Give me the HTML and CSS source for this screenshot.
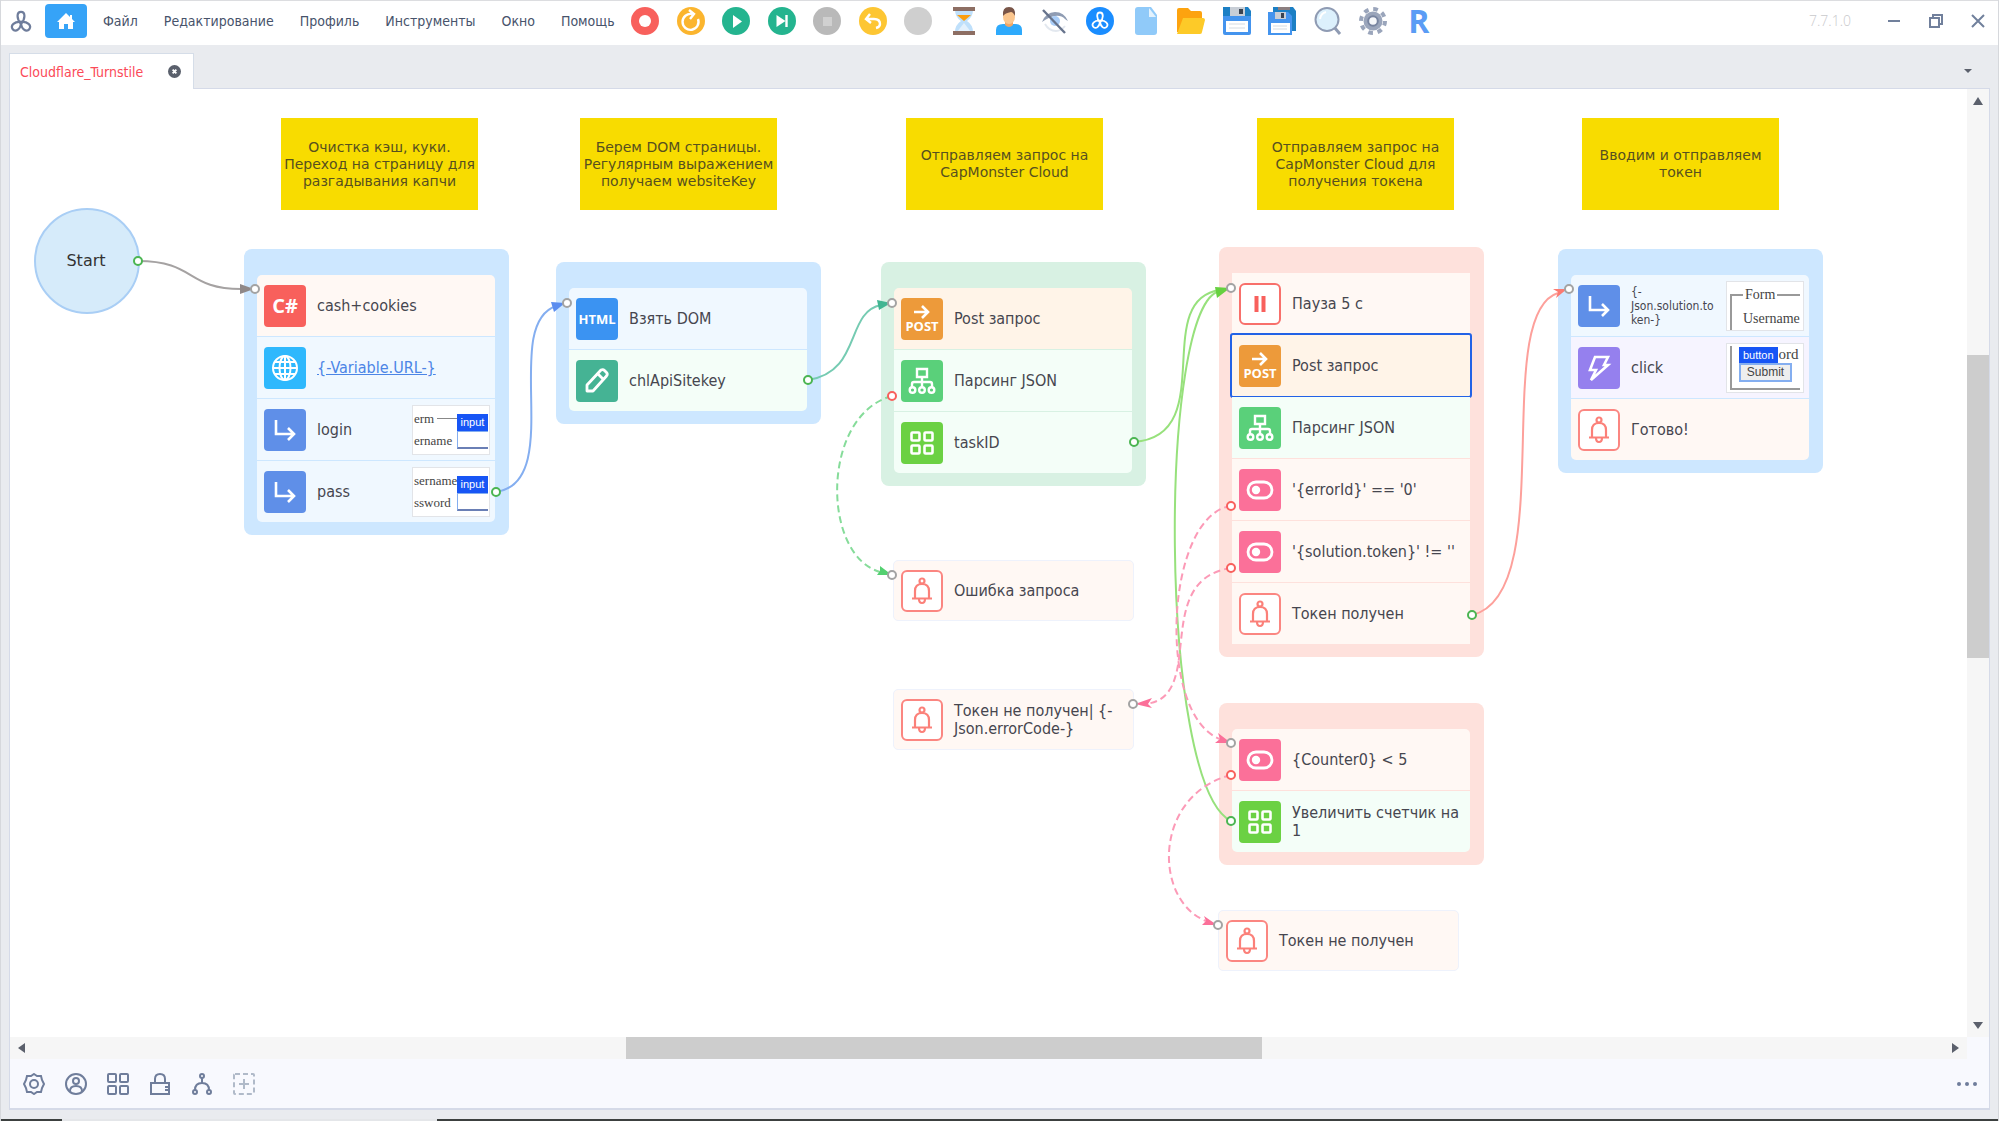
FILE: index.html
```html
<!DOCTYPE html>
<html lang="ru">
<head>
<meta charset="utf-8">
<title>Cloudflare_Turnstile</title>
<link rel="stylesheet" href="styles.css">
</head>
<body>
<svg class="defs" aria-hidden="true">
  <symbol id="i-knot" viewBox="0 0 24 24"><g fill="none" stroke="currentColor" stroke-width="2.4"><path d="M12 15C7 10 7 2 12 2s5 8 0 13z"/><path d="M12 13c-7-1-12 4-9 8s9 0 9-8z"/><path d="M12 13c7-1 12 4 9 8s-9 0-9-8z"/></g></symbol>
  <symbol id="i-globe" viewBox="0 0 28 28"><g fill="none" stroke="#fff" stroke-width="2"><circle cx="14" cy="14" r="12"/><ellipse cx="14" cy="14" rx="5.500" ry="12"/><path d="M14 2v24M2 14h24M4 8h20M4 20h20"/></g></symbol>
  <symbol id="i-enter" viewBox="0 0 28 28"><path d="M5 4v14h18M17 12l6 6-6 6" fill="none" stroke="#fff" stroke-width="2.600"/></symbol>
  <symbol id="i-pencil" viewBox="0 0 28 28"><path d="M4 18L18 3q2-1 3.500.5l2 2q1.500 1.500 0 3.500L10 24H4zM15 7l6 6" fill="none" stroke="#fff" stroke-width="2.800" stroke-linejoin="round"/></symbol>
  <symbol id="i-tree" viewBox="0 0 28 28"><g fill="none" stroke="#fff" stroke-width="2.400"><path d="M9 2h10v8H9zM14 10v10M4 20v-3q0-2 2-2h16q2 0 2 2v3"/><circle cx="4.500" cy="23" r="2.800"/><circle cx="14" cy="23" r="2.800"/><circle cx="23.500" cy="23" r="2.800"/></g></symbol>
  <symbol id="i-grid" viewBox="0 0 28 28"><g fill="none" stroke="currentColor" stroke-width="2.600"><rect x="3.500" y="3.500" width="8" height="8" rx="1"/><rect x="16.500" y="3.500" width="8" height="8" rx="1"/><rect x="3.500" y="16.500" width="8" height="8" rx="1"/><rect x="16.500" y="16.500" width="8" height="8" rx="1"/></g></symbol>
  <symbol id="i-toggle" viewBox="0 0 28 28"><rect x="2" y="6" width="24" height="16" rx="8" fill="none" stroke="#fff" stroke-width="2.800"/><circle cx="10" cy="14" r="4.200" fill="#fff"/></symbol>
  <symbol id="i-bell" viewBox="0 0 28 28"><g fill="none" stroke="#fb8079" stroke-width="2.200"><circle cx="14" cy="4" r="2.500"/><path d="M4 21.500h20M7 21v-7q0-7 7-7t7 7v7M11 22q0 4 3 4t3-4"/></g></symbol>
  <symbol id="i-pause" viewBox="0 0 28 28"><path d="M8.500 6h4v16h-4zM15.500 6h4v16h-4z" fill="#f8605c"/></symbol>
  <symbol id="i-bolt" viewBox="0 0 28 28"><path d="M10 3h13l-4 8h4L6 26l5-10H5z" fill="none" stroke="#fff" stroke-width="2.600"/></symbol>
  <symbol id="i-arrow" viewBox="0 0 18 14"><path d="M1 7h14M9 1l6 6-6 6" fill="none" stroke="#fff" stroke-width="2.600"/></symbol>
</svg>

<div class="app">
  <header class="topbar">
    <svg class="logo"><use href="#i-knot"/></svg>
    <button class="home" aria-label="Домой"><svg viewBox="0 0 20 18"><path d="M10 1L1 10h2v7h5v-5h4v5h5v-7h2l-3-3V3h-2v2z" fill="#fff"/></svg></button>
    <nav class="menu">
      <a href="#">Файл</a><a href="#">Редактирование</a><a href="#">Профиль</a><a href="#">Инструменты</a><a href="#">Окно</a><a href="#">Помощь</a>
    </nav>
    <div class="tools">
      <button aria-label="Запись"><svg viewBox="0 0 28 28"><circle cx="14" cy="14" r="14" fill="#f8605c"/><circle cx="14" cy="14" r="6" fill="#fff"/></svg></button>
      <button aria-label="Обновить"><svg viewBox="0 0 28 28"><circle cx="14" cy="14" r="14" fill="#fbb52e"/><path d="M21 12a8 8 0 1 1-6-5M12 3l5 4-4 5" fill="none" stroke="#fff" stroke-width="2.400"/></svg></button>
      <button aria-label="Пуск"><svg viewBox="0 0 28 28"><circle cx="14" cy="14" r="14" fill="#24b48f"/><path d="M11 8v13l9-6.500z" fill="#fff"/></svg></button>
      <button aria-label="Шаг"><svg viewBox="0 0 28 28"><circle cx="14" cy="14" r="14" fill="#24b48f"/><path d="M8.500 8v12l9-6z" fill="#fff"/><path d="M18.500 8v12" stroke="#fff" stroke-width="2.400"/></svg></button>
      <button aria-label="Стоп"><svg viewBox="0 0 28 28"><circle cx="14" cy="14" r="14" fill="#b9b9b9"/><path d="M10 10h9v9h-9z" fill="#d0d0d0"/></svg></button>
      <button aria-label="Отменить"><svg viewBox="0 0 28 28"><circle cx="14" cy="14" r="14" fill="#fdc633"/><path d="M7 12h8q6 0 6 5 0 3-4 4M11 7l-4 5 5 4" fill="none" stroke="#fff" stroke-width="2.400"/></svg></button>
      <button aria-label="Повторить"><svg viewBox="0 0 28 28"><circle cx="14" cy="14" r="14" fill="#cfcfcf"/></svg></button>
      <button aria-label="Ожидание"><svg viewBox="0 0 28 28"><path d="M5 3h18q0 7-6 11 6 4 6 11H5q0-7 6-11-6-4-6-11z" fill="#bfe0fb"/><path d="M7 8h14l-7 6z" fill="#fb9d0c"/><path d="M14 16l7 9H7z" fill="#e3f1fd"/><path d="M3 0h22v4H3zM3 24h22v4H3z" fill="#8d6e63"/></svg></button>
      <button aria-label="Профиль"><svg viewBox="0 0 28 28"><path d="M1 28v-5q0-6 7-6h12q7 0 7 6v5z" fill="#2eaafc"/><path d="M10 14h8v4q-4 4-8 0z" fill="#f0a768"/><ellipse cx="14" cy="10" rx="6" ry="7" fill="#fbc68e"/><path d="M8 9q-1-9 6-9t6 9q-2-4-4-4-6 1-8 4z" fill="#795548"/></svg></button>
      <button aria-label="Скрыть"><svg viewBox="0 0 28 28"><path d="M1 15Q5 5 14 5t13 9q-2-1-3-2-4-4-10-3T1 15z" fill="#8f9cb3"/><circle cx="14" cy="14" r="5" fill="#a9cdf8"/><path d="M4 17q4 7 11 7 5 0 9-5" fill="none" stroke="#e3e8ef" stroke-width="2"/><path d="M2 3l22 23" stroke="#66738c" stroke-width="2.400"/></svg></button>
      <button aria-label="Проект"><svg viewBox="0 0 28 28" color="#fff"><circle cx="14" cy="14" r="14" fill="#1a8dff"/><use href="#i-knot" x="5" y="4" width="18" height="18"/></svg></button>
      <button aria-label="Новый"><svg viewBox="0 0 28 28"><path d="M6 0h13l6 8v17q0 3-3 3H6q-3 0-3-3V3q0-3 3-3z" fill="#90caf9"/><path d="M17 1v9h7z" fill="#e3f2fd"/></svg></button>
      <button aria-label="Открыть"><svg viewBox="0 0 28 28"><path d="M2 1h9l3 3h9q2 0 2 2v19H0V3q0-2 2-2z" fill="#fda30f"/><path d="M6 11h20q2 0 2 2l-3 12q0 2-2 2H0z" fill="#fdca28"/></svg></button>
      <button aria-label="Сохранить"><svg viewBox="0 0 28 28"><path d="M0 0h24l4 5v21q0 2-2 2H2q-2 0-2-2z" fill="#4494ee"/><path d="M0 0h7v9H0zM22 0h3l3 4v5h-6z" fill="#1c7fc4"/><path d="M7 0h15v9H7z" fill="#c8ced6"/><path d="M16 2h4v5h-4z" fill="#3a4350"/><path d="M3 14h22v11H3z" fill="#fff"/><path d="M6 17h16M6 21h16" stroke="#d5dbe2"/></svg></button>
      <button aria-label="Сохранить все"><svg viewBox="0 0 28 28"><path d="M5 0h20l3 4v20H5z" fill="#1c7fc4"/><path d="M10 0h12v3H10z" fill="#8c7f80"/><path d="M0 5h20l4 4v19H0z" fill="#4494ee"/><path d="M7 5h11v7H7z" fill="#c8ced6"/><path d="M13 6h3v5h-3z" fill="#3a4350"/><path d="M3 16h19v10H3z" fill="#fff"/><path d="M5 19h14M5 22h14" stroke="#d5dbe2"/></svg></button>
      <button aria-label="Поиск"><svg viewBox="0 0 28 28"><path d="M20 20l6 7" stroke="#8f9bb3" stroke-width="3"/><circle cx="13" cy="12.500" r="11.500" fill="#dcf0fc" stroke="#8f9bb3" stroke-width="2"/><path d="M6 12q1-6 6-7" stroke="#fff" stroke-width="2" fill="none"/></svg></button>
      <button aria-label="Настройки"><svg viewBox="0 0 28 28"><circle cx="14" cy="14" r="9.500" fill="#9aa5bb"/><circle cx="14" cy="14" r="12" fill="none" stroke="#9aa5bb" stroke-width="4" stroke-dasharray="4.700 4.700"/><circle cx="14" cy="14" r="4.800" fill="#f5f7fa" stroke="#7784a0" stroke-width="2"/></svg></button>
      <button class="reg" aria-label="R">R</button>
    </div>
    <span class="version">7.7.1.0</span>
    <div class="win">
      <button aria-label="Свернуть"><svg viewBox="0 0 14 14"><path d="M1 7h12"/></svg></button>
      <button aria-label="Развернуть"><svg viewBox="0 0 14 14"><path d="M1 4h9v9H1zM4 4V1h9v9h-3"/></svg></button>
      <button aria-label="Закрыть"><svg viewBox="0 0 14 14"><path d="M1 1l12 12M13 1L1 13"/></svg></button>
    </div>
  </header>

  <main class="work">
    <div class="tabs">
      <div class="tab"><span>Cloudflare_Turnstile</span><button aria-label="Закрыть вкладку"><svg viewBox="0 0 14 14"><circle cx="7" cy="7" r="7" fill="#5a606c"/><path d="M5 5l4 4M9 5L5 9" stroke="#fff" stroke-width="2"/></svg></button></div>
      <button class="tab-list" aria-label="Список вкладок"><i class="tri down"></i></button>
    </div>
    <div class="panel">
      <div class="view">
        <div class="board">
          <p class="note n1">Очистка кэш, куки.<br>Переход на страницу для<br>разгадывания капчи</p>
          <p class="note n2">Берем DOM страницы.<br>Регулярным выражением<br>получаем websiteKey</p>
          <p class="note n3">Отправляем запрос на<br>CapMonster Cloud</p>
          <p class="note n4">Отправляем запрос на<br>CapMonster Cloud для<br>получения токена</p>
          <p class="note n5">Вводим и отправляем<br>токен</p>

          <div class="start">Start</div>

          <section class="group blue g1"><ul>
            <li class="cream"><b class="ico red big">C#</b><span>cash+cookies</span></li>
            <li class="sky"><b class="ico cyan"><svg><use href="#i-globe"/></svg></b><a href="#">{-Variable.URL-}</a></li>
            <li class="sky"><b class="ico indigo"><svg><use href="#i-enter"/></svg></b><span>login</span>
              <div class="thumb form"><div class="words"><p>erm<i></i></p><p>ername</p></div><div class="pick"><em>input</em><i></i></div></div></li>
            <li class="sky"><b class="ico indigo"><svg><use href="#i-enter"/></svg></b><span>pass</span>
              <div class="thumb form"><div class="words"><p>sername</p><p>ssword</p></div><div class="pick"><em>input</em><i></i></div></div></li>
          </ul></section>

          <section class="group blue g2"><ul>
            <li class="sky"><b class="ico azure">HTML</b><span>Взять DOM</span></li>
            <li class="mint"><b class="ico teal"><svg><use href="#i-pencil"/></svg></b><span>chlApiSitekey</span></li>
          </ul></section>

          <section class="group green g3"><ul>
            <li class="peach"><b class="ico orange"><svg class="arr"><use href="#i-arrow"/></svg>POST</b><span>Post запрос</span></li>
            <li class="mint"><b class="ico jade"><svg><use href="#i-tree"/></svg></b><span>Парсинг JSON</span></li>
            <li class="mint"><b class="ico lime"><svg><use href="#i-grid"/></svg></b><span>taskID</span></li>
          </ul></section>

          <section class="group rose g4"><ul>
            <li class="cream"><b class="ico line"><svg><use href="#i-pause"/></svg></b><span>Пауза 5 с</span></li>
            <li class="peach selected"><b class="ico orange"><svg class="arr"><use href="#i-arrow"/></svg>POST</b><span>Post запрос</span></li>
            <li class="mint"><b class="ico jade"><svg><use href="#i-tree"/></svg></b><span>Парсинг JSON</span></li>
            <li class="cream"><b class="ico pink"><svg><use href="#i-toggle"/></svg></b><span>'{errorId}' == '0'</span></li>
            <li class="cream"><b class="ico pink"><svg><use href="#i-toggle"/></svg></b><span>'{solution.token}' != ''</span></li>
            <li class="cream"><b class="ico line soft"><svg><use href="#i-bell"/></svg></b><span>Токен получен</span></li>
          </ul></section>

          <section class="group rose g5"><ul>
            <li class="cream"><b class="ico pink"><svg><use href="#i-toggle"/></svg></b><span>{Counter0} &lt; 5</span></li>
            <li class="mint"><b class="ico lime"><svg><use href="#i-grid"/></svg></b><span>Увеличить счетчик на<br>1</span></li>
          </ul></section>

          <section class="group blue g6"><ul>
            <li class="sky"><b class="ico indigo"><svg><use href="#i-enter"/></svg></b><span class="small">{-<br>Json.solution.to<br>ken-}</span>
              <div class="thumb legend"><p>Form</p><p>Username</p></div></li>
            <li class="lilac"><b class="ico violet"><svg><use href="#i-bolt"/></svg></b><span>click</span>
              <div class="thumb submit"><div><p><em>button</em>ord</p><strong>Submit</strong></div></div></li>
            <li class="cream"><b class="ico line soft"><svg><use href="#i-bell"/></svg></b><span>Готово!</span></li>
          </ul></section>

          <div class="single s1"><b class="ico line soft"><svg><use href="#i-bell"/></svg></b><span>Ошибка запроса</span></div>
          <div class="single s2"><b class="ico line soft"><svg><use href="#i-bell"/></svg></b><span>Токен не получен| {-<br>Json.errorCode-}</span></div>
          <div class="single s3"><b class="ico line soft"><svg><use href="#i-bell"/></svg></b><span>Токен не получен</span></div>

          <svg class="edges" viewBox="10 89 1956 948" aria-hidden="true">
            <g fill="none" stroke-width="2">
              <path stroke="#a5a2a2" d="M138 261C196 261 186 289 241 289"/>
              <path stroke="#84aef0" d="M496 492C566 482 500 325 556 306"/>
              <path stroke="#75cbb2" d="M808 380C862 372 845 312 881 305"/>
              <path stroke="#97e17c" d="M1134 442C1220 436 1150 300 1220 290"/>
              <path stroke="#97e17c" d="M1231 821C1158 785 1158 302 1220 291"/>
              <path stroke="#fda09b" d="M1472 615C1560 595 1490 314 1558 293"/>
              <g stroke-dasharray="7 4">
                <path stroke="#86dc9a" d="M892 396C821 415 821 555 880 572"/>
                <path stroke="#fc9ab7" d="M1231 506C1165 515 1156 715 1220 739"/>
                <path stroke="#fc9ab7" d="M1231 568C1150 580 1208 698 1145 704"/>
                <path stroke="#fc9ab7" d="M1231 775C1153 795 1153 900 1206 921"/>
              </g>
            </g>
            <g>
              <path fill="#8f8888" d="M240 284l14 5-14 5z"/>
              <path fill="#5b8def" d="M551 302l14 1-11 9z"/>
              <path fill="#42b592" d="M877 300l14 3-12 7z"/>
              <path fill="#66d03f" d="M1215 287l15 1-13 10z"/>
              <path fill="#fb7a72" d="M1553 289l14 0-11 9 2-6z"/>
              <path fill="#53d070" d="M880 566l12 9-15 0 3-4z"/>
              <path fill="#fb7099" d="M1218 733l13 10-16 0 5-4z"/>
              <path fill="#fb7099" d="M1152 698l-17 6 17 4-4-4z"/>
              <path fill="#fb7099" d="M1204 916l13 9-15 0 4-4z"/>
            </g>
            <g fill="#fff" stroke-width="2">
              <g stroke="#a3a3a3"><circle cx="255" cy="289" r="4"/><circle cx="567" cy="303" r="4"/><circle cx="892" cy="303" r="4"/><circle cx="892" cy="575" r="4"/><circle cx="1133" cy="704" r="4"/><circle cx="1231" cy="288" r="4"/><circle cx="1231" cy="743" r="4"/><circle cx="1218" cy="925" r="4"/><circle cx="1569" cy="289" r="4"/></g>
              <g stroke="#4bb552"><circle cx="138" cy="261" r="4"/><circle cx="496" cy="492" r="4"/><circle cx="808" cy="380" r="4"/><circle cx="1134" cy="442" r="4"/><circle cx="1472" cy="615" r="4"/><circle cx="1231" cy="821" r="4"/></g>
              <g stroke="#f8605c"><circle cx="892" cy="396" r="4"/><circle cx="1231" cy="506" r="4"/><circle cx="1231" cy="568" r="4"/><circle cx="1231" cy="775" r="4"/></g>
            </g>
          </svg>
        </div>
        <div class="vscroll"><i class="tri up"></i><div class="track"><div class="thumb-v"></div></div><i class="tri down"></i></div>
        <div class="hscroll"><i class="tri left"></i><div class="track"><div class="thumb-h"></div></div><i class="tri right"></i></div>
      </div>
      <footer class="bottom">
        <button aria-label="Параметры"><svg viewBox="0 0 22 22"><path d="M11 1l3 2 4 0 1 4 2 4-2 4-1 4-4 0-3 2-3-2-4 0-1-4-2-4 2-4 1-4 4 0z"/><circle cx="11" cy="11" r="4"/></svg></button>
        <button aria-label="Профиль"><svg viewBox="0 0 22 22"><circle cx="11" cy="11" r="10"/><circle cx="11" cy="8" r="3"/><path d="M5 18q0-5 6-5t6 5"/></svg></button>
        <button aria-label="Переменные"><svg viewBox="0 0 22 22"><rect x="1" y="1" width="8" height="8" rx="1"/><rect x="13" y="1" width="8" height="8" rx="1"/><rect x="1" y="13" width="8" height="8" rx="1"/><rect x="13" y="13" width="8" height="8" rx="1"/></svg></button>
        <button aria-label="Защита"><svg viewBox="0 0 22 22"><path d="M2 10h18v11H2zM6 10V6q0-5 5-5t5 5v4M16 14h3M16 17h3"/></svg></button>
        <button aria-label="Ветвление"><svg viewBox="0 0 22 22"><circle cx="11" cy="3" r="2"/><circle cx="4" cy="19" r="2"/><circle cx="18" cy="19" r="2"/><path d="M11 5v5M4 17q0-7 7-7t7 7"/></svg></button>
        <button class="dim" aria-label="Добавить"><svg viewBox="0 0 22 22"><rect x="1" y="1" width="20" height="20" rx="1" stroke-dasharray="5 3"/><path d="M11 6v10M6 11h10"/></svg></button>
        <button class="more" aria-label="Ещё"><svg viewBox="0 0 22 22"><g fill="#6f7d9b" stroke="none"><circle cx="3" cy="11" r="2"/><circle cx="11" cy="11" r="2"/><circle cx="19" cy="11" r="2"/></g></svg></button>
      </footer>
    </div>
  </main>
  <div class="taskline"><i></i></div>
</div>
</body>
</html>
```
FILE: styles.css
```css
* { box-sizing: border-box; }
body { margin: 0; font: 16px/18px "DejaVu Sans Condensed", "DejaVu Sans", sans-serif; color: #46464f; background: #e9ebef; }
button { border: 0; padding: 0; background: none; font: inherit; color: inherit; display: flex; align-items: center; justify-content: center; }
p, ul { margin: 0; padding: 0; list-style: none; }
i, em { font-style: normal; }
.defs { display: none; }
.app { min-height: 100vh; display: flex; flex-direction: column; border-left: 1px solid #d6d8dc; border-right: 1px solid #d6d8dc; }

/* top bar */
.topbar { height: 45px; flex: none; display: flex; align-items: center; background: #fff; border-top: 1px solid #dcdde0; padding-bottom: 4px; }
.logo { width: 22px; height: 22px; margin: 0 13px 0 9px; color: #6f7d9b; flex: none; }
.home { width: 42px; height: 34px; border-radius: 4px; background: #36a3f7; flex: none; }
.home svg { width: 20px; height: 18px; }
.menu { display: flex; gap: 26px; width: 544px; padding-left: 16px; flex: none; font-size: 14px; }
.menu a { color: #47536b; text-decoration: none; white-space: nowrap; }
.tools { display: flex; justify-content: space-between; width: 802px; flex: none; height: 28px; }
.tools button { width: 28px; height: 28px; }
.tools button > svg { width: 28px; height: 28px; }
.tools .reg { font: bold 32px/28px "Open Sans", sans-serif; color: #5a9cf5; }
.version { margin-left: auto; margin-right: 22px; color: #c9c9cc; font: 300 14px/18px "Open Sans", sans-serif; }
.win { display: flex; flex: none; margin-right: -1px; }
.win button { width: 42px; height: 40px; }
.win svg { width: 14px; height: 14px; fill: none; stroke: #71809c; stroke-width: 2; }

/* work area */
.work { flex: 1; display: flex; flex-direction: column; padding: 8px 8px 9px; }
.tabs { height: 36px; display: flex; justify-content: space-between; margin-bottom: -1px; position: relative; }
.tab { width: 185px; display: flex; align-items: center; justify-content: space-between; padding: 0 12px 0 10px; background: #fff; border: 1px solid #d5dde8; border-bottom: 0; color: #fb4a58; font-size: 14px; }
.tab svg { width: 13px; height: 13px; display: block; }
.tab-list { width: 44px; }
.panel { flex: 1; display: flex; flex-direction: column; border: 1px solid #d5dae8; border-bottom-width: 2px; background: #f8f9fe; }
.view { flex: 1; display: grid; grid-template: minmax(948px, 1fr) 22px / minmax(0, 1fr) 22px; }
.vscroll, .hscroll { background: #f6f6f6; display: flex; align-items: center; justify-content: space-between; }
.vscroll { flex-direction: column; padding: 8px 0; }
.hscroll { padding: 0 8px; }
.track { flex: 1; display: flex; align-self: stretch; }
.vscroll .track { flex-direction: column; }
.vscroll .track::before { content: ""; flex: 0 0 27.3%; }
.hscroll .track::before { content: ""; flex: 0 0 31.2%; }
.thumb-v { background: #cdcdcd; height: 33%; }
.thumb-h { background: #cdcdcd; width: 33%; }
.tri { border: 5px solid transparent; width: 0; height: 0; }
.tri.up { border-bottom: 8px solid #5b606c; border-top: 0; }
.tri.down { border-top: 7px solid #5b606c; border-bottom: 0; }
.tri.left { border-right: 7px solid #5b606c; border-left: 0; }
.tri.right { border-left: 7px solid #5b606c; border-right: 0; }
.tab-list .tri { border-width: 4px 4px 0; }

.bottom { height: 49px; display: flex; align-items: center; gap: 20px; padding: 0 11px 0 13px; }
.bottom svg { width: 22px; height: 22px; fill: none; stroke: #6f7d9b; stroke-width: 2; }
.bottom .dim svg { stroke: #b0bac9; }
.bottom .more { margin-left: auto; }
.taskline { height: 2px; background: #3c403f; padding-left: 61px; flex: none; }
.taskline i { display: block; width: 375px; height: 2px; background: #e4e6e9; }

/* free canvas */
.board { position: relative; background: #fff; overflow: hidden; }
.edges { position: absolute; left: 0; top: 0; width: 1956px; height: 948px; }
.note, .start, .group, .single { position: absolute; }
.note { width: 197px; height: 92px; top: 29px; background: #f8dc00; color: #57501f; display: flex; align-items: center; justify-content: center; text-align: center; font: 14px/17px "DejaVu Sans", sans-serif; white-space: nowrap; }
.n1 { left: 271px; } .n2 { left: 570px; } .n3 { left: 896px; } .n4 { left: 1247px; } .n5 { left: 1572px; }
.start { left: 24px; top: 119px; width: 106px; height: 106px; border-radius: 50%; background: #d6ebfa; border: 2px solid #a9cef5; display: flex; align-items: center; justify-content: center; color: #333; font-family: "DejaVu Sans", sans-serif; padding-right: 2px; }
.group { width: 265px; padding: 26px 14px 13px 13px; border-radius: 8px; }
.blue { background: #cde7ff; } .green { background: #d8f1e3; } .rose { background: #fee1dc; }
.g1 { left: 234px; top: 160px; } .g2 { left: 546px; top: 173px; } .g3 { left: 871px; top: 173px; }
.g4 { left: 1209px; top: 158px; } .g5 { left: 1209px; top: 614px; } .g6 { left: 1548px; top: 160px; }
.group ul { display: flex; flex-direction: column; gap: 1px; border-radius: 5px; overflow: hidden; }
.group li, .single { height: 61px; display: flex; align-items: center; gap: 11px; padding: 0 5px 0 7px; white-space: nowrap; }
.group li > a { color: #4c85e6; }
.single { width: 241px; background: #fff8f4; border: 1px solid #eef2fc; border-radius: 5px; }
.s1 { left: 883px; top: 471px; } .s2 { left: 883px; top: 600px; } .s3 { left: 1208px; top: 821px; }
.cream { background: #fff8f4; } .sky { background: #f0f8ff; } .mint { background: #f4fef8; } .peach { background: #fff4e8; } .lilac { background: #f6f4ff; }
.group ul:has(.selected) { overflow: visible; }
.selected { outline: 2px solid #2262e6; border-radius: 1px; }
.ico { width: 42px; height: 42px; flex: none; border-radius: 4px; display: flex; flex-direction: column; align-items: center; justify-content: center; color: #fff; font: bold 13px/14px "Open Sans", sans-serif; }
.ico.big { font-size: 20px; line-height: 24px; }
.ico svg { width: 28px; height: 28px; }
.ico .arr { width: 18px; height: 14px; }
.red { background: #f8605c; } .cyan { background: #2eb8fd; } .indigo { background: #5f8fe8; } .azure { background: #3b93f2; }
.teal { background: #45b394; } .orange { background: #ed9a3a; } .jade { background: #5ad07a; } .lime { background: #6bd143; }
.pink { background: #fb7099; } .violet { background: #9580ee; }
.line { background: #fff; border: 2px solid #f8706b; border-radius: 6px; }
.line.soft { border-color: #fb8681; }
.small { font-size: 12px; line-height: 14px; }

/* page previews */
.thumb { width: 78px; height: 50px; margin-left: auto; flex: none; background: #fff; border: 1px solid #e2e4e8; font: 13px/22px "Liberation Serif", serif; color: #444; }
.form { display: flex; padding: 2px 1px; }
.words { width: 43px; }
.words p { display: flex; align-items: center; gap: 3px; }
.words i { flex: 1; height: 1px; background: #888; }
.thumb em { background: #1755f5; color: #fff; font: 11px/17px "Liberation Sans", sans-serif; }
.pick { flex: 1; padding-top: 6px; }
.pick em { display: block; text-align: center; }
.pick i { display: block; height: 18px; border: 1px solid #84aef0; border-bottom: 2px solid #6a7fb5; border-right: 0; }
.legend { padding: 1px 3px 3px; font-size: 14px; }
.legend p:first-child { display: flex; align-items: center; gap: 2px; }
.legend p:first-child::before, .legend p:first-child::after { content: ""; height: 12px; margin-top: 11px; border-top: 2px solid #999; }
.legend p:first-child::before { width: 11px; border-left: 2px solid #999; }
.legend p:first-child::after { flex: 1; }
.legend p + p { border-left: 2px solid #999; padding-left: 11px; }
.submit { padding: 2px 3px; font-size: 15px; line-height: 16px; }
.submit div { height: 44px; border-left: 2px solid #999; border-bottom: 2px solid #999; padding-left: 7px; }
.submit em { display: inline-block; padding: 0 4px; margin-right: 1px; line-height: 16px; }
.submit strong { display: block; width: 53px; text-align: center; border: 2px solid #84aef0; background: #eee; font: 12px/15px "Liberation Sans", sans-serif; }
```
